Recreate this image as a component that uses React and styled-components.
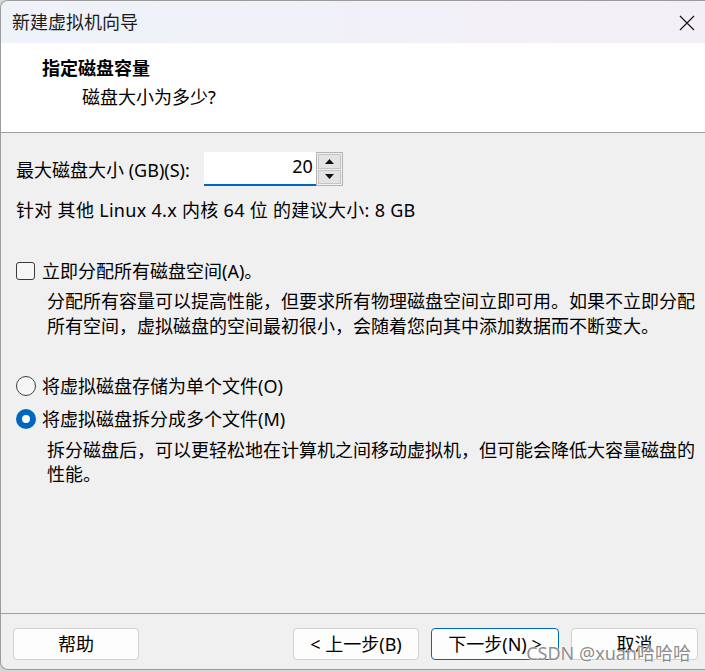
import React from 'react';
import styled, { createGlobalStyle } from 'styled-components';

const GlobalStyle = createGlobalStyle`
  html, body {
    margin: 0;
    padding: 0;
    background: #d6d6d6;
  }
  body {
    font-family: "Noto Sans", "Noto Sans CJK SC", sans-serif;
    color: #000;
  }
`;

const Window = styled.div`
  position: relative;
  width: 704px;
  height: 668px;
  display: flex;
  flex-direction: column;
  background: #f0f0f0;
  border: 1px solid #9c9c9c;
  border-right: none;
  border-radius: 8px 0 0 8px;
  overflow: hidden;
`;

const TitleBar = styled.div`
  height: 42px;
  display: flex;
  align-items: center;
  justify-content: space-between;
  padding: 0 10px 0 11px;
  background: linear-gradient(90deg, #eef2f9 0%, #f1f0f8 50%, #f4eff6 100%);
`;

const Title = styled.span`
  font-size: 18px;
  line-height: 24px;
  color: #1b1b1b;
`;

const CloseButton = styled.div`
  width: 16px;
  height: 16px;
  display: flex;
  margin-top: 1px;
`;

const Header = styled.div`
  height: 90px;
  background: #fff;
  border-bottom: 1px solid #a0a0a0;
  padding: 13px 0 0 41px;
  box-sizing: border-box;
  display: flex;
  flex-direction: column;
  gap: 5px;
`;

const HeaderTitle = styled.div`
  font-size: 18px;
  line-height: 24px;
  font-weight: 700;
`;

const HeaderSub = styled.div`
  font-size: 18px;
  line-height: 24px;
  padding-left: 40px;
`;

const Body = styled.div`
  flex: 1;
  display: flex;
  flex-direction: column;
  padding: 19px 0 0 15px;
  font-size: 18px;
`;

const SizeRow = styled.div`
  display: flex;
  align-items: center;
  height: 34px;
`;

const Label = styled.span`
  line-height: 24px;
  margin-right: 14px;
  margin-top: 2px;
`;

const Spinner = styled.div`
  display: flex;
  height: 34px;
`;

const ValueBox = styled.div`
  width: 112px;
  box-sizing: border-box;
  background: #fff;
  border-bottom: 2px solid #0067c0;
  display: flex;
  align-items: center;
  justify-content: flex-end;
  padding: 0 3px 4px 0;
  line-height: 24px;
`;

const SpinButtons = styled.div`
  width: 27px;
  box-sizing: border-box;
  border: 1px solid #b3b3b3;
  display: flex;
  flex-direction: column;
  gap: 1px;
  padding: 1px;
  background: #f0f0f0;
`;

const SpinButton = styled.div`
  flex: 1;
  background: #e3e3e3;
  border: 1px solid #c4c4c4;
  display: flex;
  align-items: center;
  justify-content: center;
`;

const Line = styled.div`
  line-height: ${p => p.$lh || 24}px;
  margin-top: ${p => p.$mt || 0}px;
  margin-left: ${p => p.$ml || 0}px;
  white-space: nowrap;
  letter-spacing: 0.3px;
`;

const OptionRow = styled.label`
  display: flex;
  align-items: center;
  height: 24px;
  margin-top: ${p => p.$mt || 0}px;
  line-height: 24px;
`;

const CheckBox = styled.span`
  width: 19px;
  height: 18px;
  box-sizing: border-box;
  border: 1px solid #3a3a3a;
  border-radius: 3px;
  background: #f6f6f6;
  margin-right: 7px;
  flex-shrink: 0;
`;

const Radio = styled.span`
  width: 20px;
  height: 20px;
  box-sizing: border-box;
  border-radius: 50%;
  border: ${p => (p.$checked ? 'none' : '1px solid #3f3f3f')};
  background: ${p => (p.$checked ? '#0067c0' : '#f6f6f6')};
  margin-right: 6px;
  flex-shrink: 0;
  display: flex;
  align-items: center;
  justify-content: center;

  &::after {
    content: '';
    display: ${p => (p.$checked ? 'block' : 'none')};
    width: 8px;
    height: 8px;
    border-radius: 50%;
    background: #fff;
  }
`;

const Paragraph = styled.div`
  margin-left: 31px;
  margin-top: ${p => p.$mt || 0}px;
  line-height: ${p => p.$lh || 24}px;
  width: 655px;
`;

const Footer = styled.div`
  height: 56px;
  border-top: 1px solid #a0a0a0;
  display: flex;
  align-items: flex-start;
  padding: 14px 7px 0 12px;
  box-sizing: border-box;
`;

const ButtonGroup = styled.div`
  margin-left: auto;
  display: flex;
  gap: 12px;
`;

const Button = styled.button`
  width: ${p => p.$w || 127}px;
  height: 32px;
  box-sizing: border-box;
  background: #fdfdfd;
  border: 1px solid ${p => (p.$primary ? '#0067c0' : '#d0d0d0')};
  border-radius: 4px;
  font-family: "Noto Sans", "Noto Sans CJK SC", sans-serif;
  font-size: 18px;
  line-height: 24px;
  color: #000;
  padding: 0;
`;

const Watermark = styled.div`
  position: absolute;
  right: 14px;
  bottom: 4px;
  font-family: "Noto Sans", "Noto Sans CJK SC", sans-serif;
  font-size: 18px;
  line-height: 24px;
  color: rgba(120, 120, 120, 0.85);
  text-shadow: 0 0 2px #fff, 0 0 1px #fff;
  pointer-events: none;
`;

const Arrow = ({ up }) => (
  <svg width="9" height="5" viewBox="0 0 9 5">
    <polygon points={up ? '4.5,0 9,5 0,5' : '0,0 9,0 4.5,5'} fill="#111" />
  </svg>
);

export default function App() {
  return (
    <>
      <GlobalStyle />
      <Window>
        <TitleBar>
          <Title>新建虚拟机向导</Title>
          <CloseButton>
            <svg width="16" height="16" viewBox="0 0 16 16">
              <path d="M1 1 L15 15 M15 1 L1 15" stroke="#1b1b1b" strokeWidth="1.3" />
            </svg>
          </CloseButton>
        </TitleBar>

        <Header>
          <HeaderTitle>指定磁盘容量</HeaderTitle>
          <HeaderSub>磁盘大小为多少?</HeaderSub>
        </Header>

        <Body>
          <SizeRow>
            <Label>最大磁盘大小 (GB)(S):</Label>
            <Spinner>
              <ValueBox>20</ValueBox>
              <SpinButtons>
                <SpinButton><Arrow up /></SpinButton>
                <SpinButton><Arrow /></SpinButton>
              </SpinButtons>
            </Spinner>
          </SizeRow>

          <Line $mt={12}>针对 其他 Linux 4.x 内核 64 位 的建议大小: 8 GB</Line>

          <OptionRow $mt={37}>
            <CheckBox />
            立即分配所有磁盘空间(A)。
          </OptionRow>
          <Paragraph $mt={6} $lh={25}>
            分配所有容量可以提高性能，但要求所有物理磁盘空间立即可用。如果不立即分配所有空间，虚拟磁盘的空间最初很小，会随着您向其中添加数据而不断变大。
          </Paragraph>

          <OptionRow $mt={35}>
            <Radio />
            将虚拟磁盘存储为单个文件(O)
          </OptionRow>
          <OptionRow $mt={9}>
            <Radio $checked />
            将虚拟磁盘拆分成多个文件(M)
          </OptionRow>
          <Paragraph $mt={7}>
            拆分磁盘后，可以更轻松地在计算机之间移动虚拟机，但可能会降低大容量磁盘的性能。
          </Paragraph>
        </Body>

        <Footer>
          <Button $w={126}>帮助</Button>
          <ButtonGroup>
            <Button $w={126}>&lt; 上一步(B)</Button>
            <Button $w={128} $primary>下一步(N) &gt;</Button>
            <Button>取消</Button>
          </ButtonGroup>
        </Footer>

        <Watermark>CSDN @xuan哈哈哈</Watermark>
      </Window>
    </>
  );
}
